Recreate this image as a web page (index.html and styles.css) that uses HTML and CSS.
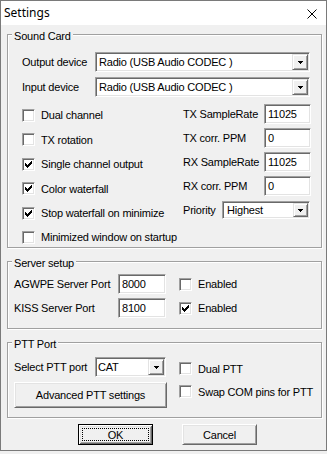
FILE: index.html
```html
<!DOCTYPE html>
<html>
<head>
<meta charset="utf-8">
<title>Settings</title>
<link rel="stylesheet" href="styles.css">
</head>
<body>
<div class="window">
  <div class="titlebar">
    <span class="title">Settings</span>
    <svg class="close" width="10" height="10" viewBox="0 0 10 10"><path d="M0.5 0.5L9.5 9.5M9.5 0.5L0.5 9.5" stroke="#000" stroke-width="1" fill="none"/></svg>
  </div>
  <div class="client">
    <div class="group sound">
      <div class="legend">Sound Card</div>
      <div class="devrow first">
        <span class="devlabel">Output device</span>
        <div class="field combo wide"><span class="ctext">Radio (USB Audio CODEC )</span><span class="drop"><svg width="5" height="3" viewBox="0 0 5 3"><path d="M0 0h5v1H0zM1 1h3v1H1zM2 2h1v1H2z"/></svg></span></div>
      </div>
      <div class="devrow second">
        <span class="devlabel">Input device</span>
        <div class="field combo wide"><span class="ctext">Radio (USB Audio CODEC )</span><span class="drop"><svg width="5" height="3" viewBox="0 0 5 3"><path d="M0 0h5v1H0zM1 1h3v1H1zM2 2h1v1H2z"/></svg></span></div>
      </div>
      <div class="cols">
        <div class="leftcol">
          <div class="check-row"><span class="cb"></span><span>Dual channel</span></div>
          <div class="check-row"><span class="cb"></span><span>TX rotation</span></div>
          <div class="check-row"><span class="cb"><svg width="9" height="9" viewBox="0 0 9 9"><path d="M7 1h1v1H7zM6 2h2v1H6zM1 3h1v1H1zM5 3h3v1H5zM1 4h2v1H1zM4 4h3v1H4zM1 5h5v1H1zM2 6h3v1H2zM3 7h1v1H3z"/></svg></span><span>Single channel output</span></div>
          <div class="check-row"><span class="cb"><svg width="9" height="9" viewBox="0 0 9 9"><path d="M7 1h1v1H7zM6 2h2v1H6zM1 3h1v1H1zM5 3h3v1H5zM1 4h2v1H1zM4 4h3v1H4zM1 5h5v1H1zM2 6h3v1H2zM3 7h1v1H3z"/></svg></span><span>Color waterfall</span></div>
          <div class="check-row"><span class="cb"><svg width="9" height="9" viewBox="0 0 9 9"><path d="M7 1h1v1H7zM6 2h2v1H6zM1 3h1v1H1zM5 3h3v1H5zM1 4h2v1H1zM4 4h3v1H4zM1 5h5v1H1zM2 6h3v1H2zM3 7h1v1H3z"/></svg></span><span>Stop waterfall on minimize</span></div>
          <div class="check-row"><span class="cb"></span><span>Minimized window on startup</span></div>
        </div>
        <div class="rightcol">
          <div class="field-row"><span class="flabel">TX SampleRate</span><div class="field num">11025</div></div>
          <div class="field-row"><span class="flabel">TX corr. PPM</span><div class="field num">0</div></div>
          <div class="field-row"><span class="flabel">RX SampleRate</span><div class="field num">11025</div></div>
          <div class="field-row"><span class="flabel">RX corr. PPM</span><div class="field num">0</div></div>
          <div class="field-row"><span class="prlabel">Priority</span><div class="field combo prio"><span class="ctext">Highest</span><span class="drop"><svg width="5" height="3" viewBox="0 0 5 3"><path d="M0 0h5v1H0zM1 1h3v1H1zM2 2h1v1H2z"/></svg></span></div></div>
        </div>
      </div>
    </div>

    <div class="group server">
      <div class="legend">Server setup</div>
      <div class="srow first">
        <span class="slabel">AGWPE Server Port</span>
        <div class="field port">8000</div>
        <span class="cb spaced"></span><span>Enabled</span>
      </div>
      <div class="srow second">
        <span class="slabel">KISS Server Port</span>
        <div class="field port">8100</div>
        <span class="cb spaced"><svg width="9" height="9" viewBox="0 0 9 9"><path d="M7 1h1v1H7zM6 2h2v1H6zM1 3h1v1H1zM5 3h3v1H5zM1 4h2v1H1zM4 4h3v1H4zM1 5h5v1H1zM2 6h3v1H2zM3 7h1v1H3z"/></svg></span><span>Enabled</span>
      </div>
    </div>

    <div class="group ptt">
      <div class="legend">PTT Port</div>
      <div class="pttbody">
        <div class="pleft">
          <div class="prow">
            <span class="pttlabel">Select PTT port</span>
            <div class="field combo cat"><span class="ctext">CAT</span><span class="drop"><svg width="5" height="3" viewBox="0 0 5 3"><path d="M0 0h5v1H0zM1 1h3v1H1zM2 2h1v1H2z"/></svg></span></div>
          </div>
          <button class="btn adv" type="button">Advanced PTT settings</button>
        </div>
        <div class="pright">
          <div class="prow2"><span class="cb"></span><span>Dual PTT</span></div>
          <div class="prow2"><span class="cb"></span><span>Swap COM pins for PTT</span></div>
        </div>
      </div>
    </div>

    <div class="buttons">
      <button class="btn default" type="button"><span class="focus">OK</span></button>
      <button class="btn" type="button">Cancel</button>
    </div>
  </div>
</div>
</body>
</html>
```

FILE: styles.css
```css
* {
  box-sizing: border-box;
}

html,
body {
  margin: 0;
  padding: 0;
  background: #f0f0f0;
}

body {
  font-family: "Liberation Sans", Arial, sans-serif;
  font-size: 11px;
  letter-spacing: -0.2px;
  color: #000;
  white-space: nowrap;
}

.window {
  width: 327px;
  height: 451px;
  border: 1px solid #7a7a7a;
  background: #f0f0f0;
  display: flex;
  flex-direction: column;
}

.titlebar {
  flex: none;
  height: 24px;
  background: #fff;
  display: flex;
  align-items: center;
  justify-content: space-between;
  padding: 0 9px 0 3px;
}

.title {
  font-family: "Noto Sans", "Open Sans", sans-serif;
  font-size: 12px;
  letter-spacing: 0;
  line-height: 24px;
}

.close {
  display: block;
  margin-top: 1px;
}

.client {
  padding: 9px 0 0 6px;
}

/* group boxes (etched frame) */
.group {
  width: 315px;
  border: 1px solid #a0a0a0;
  box-shadow: inset 1px 1px 0 #fff, 1px 1px 0 #fff;
}

.sound {
  height: 214px;
}

.server {
  height: 68px;
  margin-top: 13px;
}

.ptt {
  height: 76px;
  margin-top: 13px;
}

.legend {
  width: max-content;
  height: 14px;
  line-height: 14px;
  margin: -6px 0 0 4px;
  padding: 0 2px;
  background: #f0f0f0;
}

/* sunken fields */
.field {
  background: #fff;
  border: 1px solid;
  border-color: #a0a0a0 #fff #fff #a0a0a0;
  box-shadow: inset 1px 1px 0 #696969, inset -1px -1px 0 #e3e3e3;
}

.combo {
  display: flex;
  align-items: stretch;
  padding: 1px;
}

.ctext {
  flex: 1;
  display: flex;
  align-items: center;
  padding-left: 2px;
  overflow: hidden;
}

.drop {
  flex: none;
  width: 16px;
  display: flex;
  align-items: center;
  justify-content: center;
  padding-top: 1px;
  background: #f0f0f0;
  border: 1px solid;
  border-color: #e3e3e3 #696969 #696969 #e3e3e3;
  box-shadow: inset 1px 1px 0 #fff, inset -1px -1px 0 #a0a0a0;
}

.drop svg {
  display: block;
  fill: #000;
}

/* sound card rows */
.devrow {
  display: flex;
  align-items: center;
  height: 20px;
  padding-left: 14px;
}

.devrow.first {
  margin-top: 9px;
}

.devrow.second {
  margin-top: 5px;
}

.devlabel {
  width: 73px;
}

.combo.wide {
  width: 215px;
  height: 20px;
}

.cols {
  display: flex;
  margin-top: 5px;
}

.leftcol {
  width: 175px;
  padding: 1.3px 0 0 14px;
}

.check-row {
  height: 24.4px;
  display: flex;
  align-items: center;
}

.cb {
  flex: none;
  width: 13px;
  height: 13px;
  margin-right: 6px;
  padding: 1px;
  background: #fff;
  border: 1px solid;
  border-color: #a0a0a0 #fff #fff #a0a0a0;
  box-shadow: inset 1px 1px 0 #696969, inset -1px -1px 0 #e3e3e3;
}

.cb svg {
  display: block;
  fill: #000;
}

.rightcol {
  flex: none;
}

.field-row {
  height: 24px;
  display: flex;
  align-items: center;
}

.flabel {
  width: 81px;
}

.num {
  width: 47px;
  height: 20px;
  padding: 0 0 0 3px;
  display: flex;
  align-items: center;
}

.prlabel {
  width: 39px;
}

.combo.prio {
  width: 88px;
  height: 18px;
}

.combo.prio .ctext {
  padding-left: 3px;
}

.combo.prio .drop {
  width: 15px;
}

/* server setup */
.srow {
  display: flex;
  align-items: center;
  height: 20px;
  padding-left: 6px;
}

.srow.first {
  margin-top: 4px;
}

.srow.second {
  margin-top: 4px;
}

.slabel {
  width: 104px;
}

.port {
  width: 48px;
  height: 20px;
  padding-left: 3px;
  display: flex;
  align-items: center;
}

.cb.spaced {
  margin-left: 13px;
}

/* ptt */
.pttbody {
  display: flex;
  margin-top: 6px;
  padding-left: 6px;
}

.pleft {
  width: 153px;
}

.prow {
  display: flex;
  align-items: center;
  height: 20px;
}

.pttlabel {
  width: 81px;
}

.combo.cat {
  width: 71px;
  height: 20px;
}

.combo.cat .ctext {
  padding-left: 1px;
}

.pright {
  margin-left: 12px;
}

.prow2 {
  height: 23px;
  display: flex;
  align-items: center;
}

/* buttons */
.btn {
  font: inherit;
  letter-spacing: inherit;
  color: #000;
  width: 75px;
  height: 21px;
  margin: 0;
  padding: 0;
  background: #f0f0f0;
  border: 1px solid;
  border-color: #fff #696969 #696969 #fff;
  box-shadow: inset 1px 1px 0 #e3e3e3, inset -1px -1px 0 #a0a0a0;
  display: flex;
  align-items: center;
  justify-content: center;
}

.btn.adv {
  width: 153px;
  height: 26px;
  margin-top: 5px;
}

.btn.default {
  border-color: #000;
  box-shadow: inset 1px 1px 0 #fff, inset -1px -1px 0 #696969, inset 2px 2px 0 #e3e3e3, inset -2px -2px 0 #a0a0a0;
  padding: 3px;
}

.focus {
  flex: 1;
  align-self: stretch;
  display: flex;
  align-items: center;
  justify-content: center;
  border: 1px dotted #000;
}

.buttons {
  display: flex;
  gap: 29px;
  margin-top: 6px;
  padding-left: 71px;
}
```
